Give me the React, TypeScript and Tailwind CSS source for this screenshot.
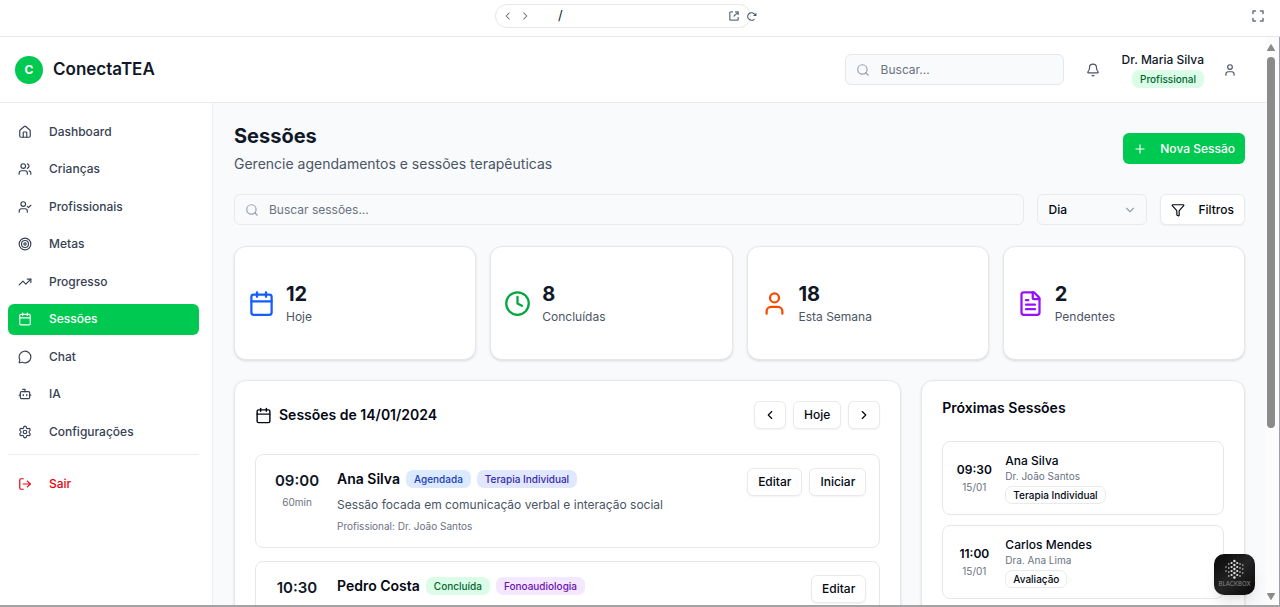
import type { ReactNode } from "react";
import {
  Bell,
  Bot,
  Calendar,
  ChevronDown,
  ChevronLeft,
  ChevronRight,
  Clock,
  FileText,
  Funnel,
  House,
  LogOut,
  MessageCircle,
  Plus,
  Search,
  Settings,
  Target,
  TrendingUp,
  User,
  UserCheck,
  Users,
  type LucideIcon,
} from "lucide-react";
import { PiArrowClockwiseBold, PiCaretLeftBold, PiCaretRightBold, PiCornersOutBold } from "react-icons/pi";

const navItems: { label: string; icon: LucideIcon; active?: boolean }[] = [
  { label: "Dashboard", icon: House },
  { label: "Crianças", icon: Users },
  { label: "Profissionais", icon: UserCheck },
  { label: "Metas", icon: Target },
  { label: "Progresso", icon: TrendingUp },
  { label: "Sessões", icon: Calendar, active: true },
  { label: "Chat", icon: MessageCircle },
  { label: "IA", icon: Bot },
  { label: "Configurações", icon: Settings },
];

const stats: { value: string; label: string; icon: LucideIcon; color: string }[] = [
  { value: "12", label: "Hoje", icon: Calendar, color: "text-blue-600" },
  { value: "8", label: "Concluídas", icon: Clock, color: "text-green-600" },
  { value: "18", label: "Esta Semana", icon: User, color: "text-orange-600" },
  { value: "2", label: "Pendentes", icon: FileText, color: "text-purple-600" },
];

const sessions = [
  {
    time: "09:00",
    duration: "60min",
    name: "Ana Silva",
    status: "Agendada",
    statusClass: "border-transparent bg-blue-100 text-blue-800",
    type: "Terapia Individual",
    typeClass: "border-transparent bg-indigo-100 text-indigo-800",
    description: "Sessão focada em comunicação verbal e interação social",
    professional: "Dr. João Santos",
    actions: ["Editar", "Iniciar"],
  },
  {
    time: "10:30",
    duration: "45min",
    name: "Pedro Costa",
    status: "Concluída",
    statusClass: "border-transparent bg-green-100 text-green-800",
    type: "Fonoaudiologia",
    typeClass: "border-transparent bg-purple-100 text-purple-800",
    description: "Exercícios de articulação e fala",
    professional: "Dra. Ana Lima",
    actions: ["Editar"],
  },
];

const upcoming = [
  { time: "09:30", date: "15/01", name: "Ana Silva", professional: "Dr. João Santos", type: "Terapia Individual" },
  { time: "11:00", date: "15/01", name: "Carlos Mendes", professional: "Dra. Ana Lima", type: "Avaliação" },
];

function OutlineButton({ children, label }: { children: ReactNode; label?: string }) {
  return (
    <button
      type="button"
      aria-label={label}
      className={`flex h-7 items-center justify-center rounded-md border border-[#e9eaed] bg-white text-[12px] font-medium text-gray-950 shadow-xs ${
        label ? "px-2" : "px-[10px]"
      }`}
    >
      {children}
    </button>
  );
}

function Badge({ children, className }: { children: ReactNode; className: string }) {
  return (
    <span className={`rounded-[7px] border px-[7px] text-[10px] leading-4 font-medium whitespace-nowrap ${className}`}>
      {children}
    </span>
  );
}

function ExternalIcon() {
  return (
    <svg width="12" height="12" viewBox="0 0 12 12" fill="none" stroke="currentColor" strokeWidth="1.3">
      <path d="M5 1.9H2.6a.8.8 0 0 0-.8.8v6.7c0 .5.4.8.8.8h6.8c.4 0 .8-.3.8-.8V7" />
      <path d="M7 1.9h3.2v3.2M10 2.1 5.6 6.5" />
    </svg>
  );
}

function BrowserBar() {
  return (
    <div className="flex h-[37px] shrink-0 items-start border-b border-gray-200 bg-white pt-1 text-gray-600">
      <div className="flex-1" />
      <div className="mr-5 flex h-6 w-[256px] items-center rounded-full border border-gray-200 pl-[6px]">
        <button type="button" aria-label="Voltar" className="shrink-0 px-[1px] text-gray-500">
          <PiCaretLeftBold size={10} />
        </button>
        <button type="button" aria-label="Avançar" className="ml-[5px] shrink-0 px-[1px] text-gray-500">
          <PiCaretRightBold size={10} />
        </button>
        <input
          aria-label="Endereço"
          defaultValue="/"
          className="ml-[27px] w-[170px] shrink-0 font-[Inter] text-[13px] text-gray-900 outline-none"
        />
        <button type="button" aria-label="Abrir em nova aba" className="shrink-0 text-gray-500">
          <ExternalIcon />
        </button>
        <button type="button" aria-label="Recarregar" className="ml-[6px] shrink-0">
          <PiArrowClockwiseBold size={11} />
        </button>
      </div>
      <div className="flex flex-1 justify-end pt-1 pr-[14px] text-gray-500">
        <button type="button" aria-label="Tela cheia">
          <PiCornersOutBold size={16} />
        </button>
      </div>
    </div>
  );
}

function Header() {
  return (
    <header className="flex h-[66px] shrink-0 items-center justify-between border-b border-[#e9eaed] bg-white pr-[21px] pl-[15px]">
      <div className="flex items-center gap-[10px]">
        <div className="flex size-[28px] items-center justify-center rounded-full bg-[#00c951] text-[12px] font-bold text-white">
          C
        </div>
        <span className="text-[17px] font-semibold text-gray-900">ConectaTEA</span>
      </div>
      <div className="flex items-center">
        <label className="flex h-[31px] w-[219px] items-center gap-[11px] rounded-md border border-gray-200 bg-gray-50 px-[10px]">
          <Search size={14} className="shrink-0 text-gray-400" />
          <input
            type="search"
            aria-label="Buscar"
            placeholder="Buscar..."
            className="w-full text-[12px] text-gray-900 outline-none placeholder:text-gray-500"
          />
        </label>
        <button type="button" aria-label="Notificações" className="ml-[21px] p-[1px] text-gray-600">
          <Bell size={14} />
        </button>
        <div className="ml-[21px] flex flex-col items-end gap-[1px]">
          <span className="text-[12px] leading-[18px] font-medium text-gray-900">Dr. Maria Silva</span>
          <Badge className="border-transparent bg-green-100 text-green-800">Profissional</Badge>
        </div>
        <button type="button" aria-label="Perfil" className="ml-[18px] p-[1px] pr-2 text-gray-600">
          <User size={14} />
        </button>
      </div>
    </header>
  );
}

function Sidebar() {
  return (
    <aside className="w-[213px] shrink-0 border-r border-[#eceef1] bg-white pt-[13px] pr-[13px] pl-2">
      <nav className="flex h-[331px] flex-col justify-between">
        {navItems.map(({ label, icon: Icon, active }) => (
          <a
            key={label}
            href="#"
            aria-current={active ? "page" : undefined}
            className={`flex h-[31px] items-center gap-[17px] rounded-md px-[10px] text-[12px] font-medium ${
              active ? "bg-[#00c951] text-white" : "text-gray-700"
            }`}
          >
            <Icon size={14} />
            {label}
          </a>
        ))}
      </nav>
      <div className="mt-[7px] border-t border-[#eceef1] pt-[13px]">
        <button type="button" className="flex h-[31px] w-full items-center gap-[17px] px-[10px] text-[12px] font-medium text-red-600">
          <LogOut size={14} />
          Sair
        </button>
      </div>
    </aside>
  );
}

function SessionsPanel() {
  return (
    <section className="col-span-2 rounded-xl border border-gray-200 bg-white p-5 shadow-sm">
      <div className="mb-[25px] flex items-center justify-between">
        <h2 className="flex items-center gap-[7px] text-[14px] leading-[18px] font-semibold text-gray-950">
          <Calendar size={17} />
          Sessões de 14/01/2024
        </h2>
        <div className="flex gap-[7px]">
          <OutlineButton label="Dia anterior">
            <ChevronLeft size={14} />
          </OutlineButton>
          <OutlineButton>Hoje</OutlineButton>
          <OutlineButton label="Próximo dia">
            <ChevronRight size={14} />
          </OutlineButton>
        </div>
      </div>
      <div className="flex flex-col gap-[13px]">
        {sessions.map((s) => (
          <article key={s.time} className="flex items-start rounded-lg border border-gray-200 p-[13px]">
            <div className="mr-3 w-14 shrink-0 text-center">
              <div className="text-[15px] leading-[26px] font-semibold text-gray-900">{s.time}</div>
              <div className="text-[10px] leading-[17px] text-gray-500">{s.duration}</div>
            </div>
            <div className="flex-1">
              <div className="flex items-center gap-[6px]">
                <h3 className="text-[14px] leading-[22px] font-semibold text-gray-950">{s.name}</h3>
                <Badge className={s.statusClass}>{s.status}</Badge>
                <Badge className={s.typeClass}>{s.type}</Badge>
              </div>
              <p className="mt-[6px] text-[12px] leading-[18px] text-gray-600">{s.description}</p>
              <p className="mt-1 text-[10px] leading-[16px] text-gray-500">Profissional: {s.professional}</p>
            </div>
            <div className="flex gap-[7px]">
              {s.actions.map((a) => (
                <OutlineButton key={a}>{a}</OutlineButton>
              ))}
            </div>
          </article>
        ))}
      </div>
    </section>
  );
}

function UpcomingPanel() {
  return (
    <section className="rounded-xl border border-gray-200 bg-white p-5 shadow-sm">
      <h2 className="mb-[26px] text-[14px] leading-[14px] font-semibold text-gray-950">Próximas Sessões</h2>
      <div className="flex flex-col gap-[10px]">
        {upcoming.map((u) => (
          <article key={u.time} className="flex items-center gap-[13px] rounded-lg border border-gray-200 px-[13px] py-[10px]">
            <div className="w-9 shrink-0 text-center">
              <div className="text-[12px] leading-[19px] font-semibold text-gray-950">{u.time}</div>
              <div className="text-[10px] leading-[17px] text-gray-500">{u.date}</div>
            </div>
            <div className="flex flex-col items-start">
              <h3 className="text-[12px] leading-[18px] font-medium text-gray-950">{u.name}</h3>
              <p className="mb-[3px] text-[10px] leading-[13px] text-gray-500">{u.professional}</p>
              <Badge className="border-[#e9eaed] text-gray-950">{u.type}</Badge>
            </div>
          </article>
        ))}
      </div>
    </section>
  );
}

function MainContent() {
  return (
    <main className="min-w-0 flex-1 bg-gray-50 px-[21px] pt-[19px]">
      <div className="flex items-center justify-between">
        <div>
          <h1 className="text-[20px] leading-[28px] font-bold text-gray-900">Sessões</h1>
          <p className="mt-[3px] text-[14px] leading-[22px] text-gray-600">Gerencie agendamentos e sessões terapêuticas</p>
        </div>
        <button
          type="button"
          className="flex h-[31px] items-center gap-[13px] rounded-md bg-[#00c951] px-[10px] text-[12px] font-medium text-white"
        >
          <Plus size={14} />
          Nova Sessão
        </button>
      </div>

      <div className="mt-[19px] flex gap-[13px]">
        <label className="flex h-[31px] flex-1 items-center gap-[10px] rounded-md border border-[#e9eaed] bg-gray-50 px-[10px]">
          <Search size={14} className="shrink-0 text-gray-400" />
          <input
            type="search"
            aria-label="Buscar sessões"
            placeholder="Buscar sessões..."
            className="w-full text-[12px] text-gray-900 outline-none placeholder:text-gray-500"
          />
        </label>
        <div className="relative">
          <select
            aria-label="Período"
            className="h-[31px] w-[110px] appearance-none rounded-md border border-[#e9eaed] bg-gray-50 px-[10px] text-[12px] font-medium text-gray-950"
          >
            <option>Dia</option>
            <option>Semana</option>
            <option>Mês</option>
          </select>
          <ChevronDown size={14} className="pointer-events-none absolute top-[9px] right-[10px] text-gray-400" />
        </div>
        <button
          type="button"
          className="flex h-[31px] items-center gap-[13px] rounded-md border border-[#e9eaed] bg-white px-[10px] text-[12px] font-medium text-gray-950 shadow-xs"
        >
          <Funnel size={14} />
          Filtros
        </button>
      </div>

      <div className="mt-[21px] grid grid-cols-4 gap-[14px]">
        {stats.map(({ value, label, icon: Icon, color }) => (
          <div key={label} className="flex h-[114px] items-center gap-[11px] rounded-xl border border-gray-200 bg-white px-[13px] shadow-sm">
            <Icon size={27} className={color} />
            <div>
              <p className="text-[20px] leading-[27px] font-bold text-gray-900">{value}</p>
              <p className="text-[12px] leading-[18px] text-gray-600">{label}</p>
            </div>
          </div>
        ))}
      </div>

      <div className="mt-5 grid grid-cols-3 gap-5">
        <SessionsPanel />
        <UpcomingPanel />
      </div>
    </main>
  );
}

function Scrollbar() {
  return (
    <div aria-hidden="true" className="flex w-[14px] shrink-0 flex-col items-center border-r border-gray-400 bg-[#fcfcfc] pt-[7px] pr-1 pb-[5px]">
      <svg width="8" height="7" viewBox="0 0 8 7">
        <path d="M4 0.5 L7.6 6.5 H0.4 Z" fill="#8b8b8b" stroke="#8b8b8b" strokeLinejoin="round" />
      </svg>
      <div className="my-[6px] flex w-2 flex-1 flex-col">
        <div className="h-[70%] rounded-full bg-[#8b8b8b]" />
      </div>
      <svg width="8" height="7" viewBox="0 0 8 7">
        <path d="M4 6.5 L7.6 0.5 H0.4 Z" fill="#8b8b8b" stroke="#8b8b8b" strokeLinejoin="round" />
      </svg>
    </div>
  );
}

const dotColumns = [
  { x: 12, ys: [13, 17], r: 0.7 },
  { x: 14.8, ys: [10, 14, 18, 22], r: 0.8 },
  { x: 17.6, ys: [9, 13, 17, 21], r: 1.1 },
  { x: 20.4, ys: [7, 11, 15, 19, 23.5], r: 1.2 },
  { x: 23.2, ys: [9, 13, 17, 21], r: 1.1 },
  { x: 26, ys: [10, 14, 18, 22], r: 0.8 },
  { x: 28.8, ys: [11, 15, 19], r: 0.7 },
];

function BlackboxBadge() {
  return (
    <a
      href="#"
      aria-label="Blackbox"
      className="absolute right-[25px] bottom-[10px] size-[41px] rounded-[10px] bg-gradient-to-br from-[#080808] via-[#242424] to-[#080808] shadow-lg"
    >
      <svg viewBox="0 0 41 41" className="size-full">
        {dotColumns.map(({ x, ys, r }) =>
          ys.map((y) => <circle key={`${x}-${y}`} cx={x} cy={y} r={r} fill="#e0e0e0" />),
        )}
        <text x="20.5" y="31.5" textAnchor="middle" fontFamily="Inter, sans-serif" fontSize="6" fill="#8a8a8a">
          BLACKBOX
        </text>
      </svg>
    </a>
  );
}

export default function App() {
  return (
    <div className="relative flex h-screen flex-col overflow-hidden border-b-2 border-[#a3a3a3] bg-white font-[Inter,sans-serif]">
      <BrowserBar />
      <div className="flex min-h-0 flex-1">
        <div className="flex min-w-0 flex-1 flex-col overflow-hidden">
          <Header />
          <div className="flex min-h-0 flex-1">
            <Sidebar />
            <MainContent />
          </div>
        </div>
        <Scrollbar />
      </div>
      <BlackboxBadge />
    </div>
  );
}
